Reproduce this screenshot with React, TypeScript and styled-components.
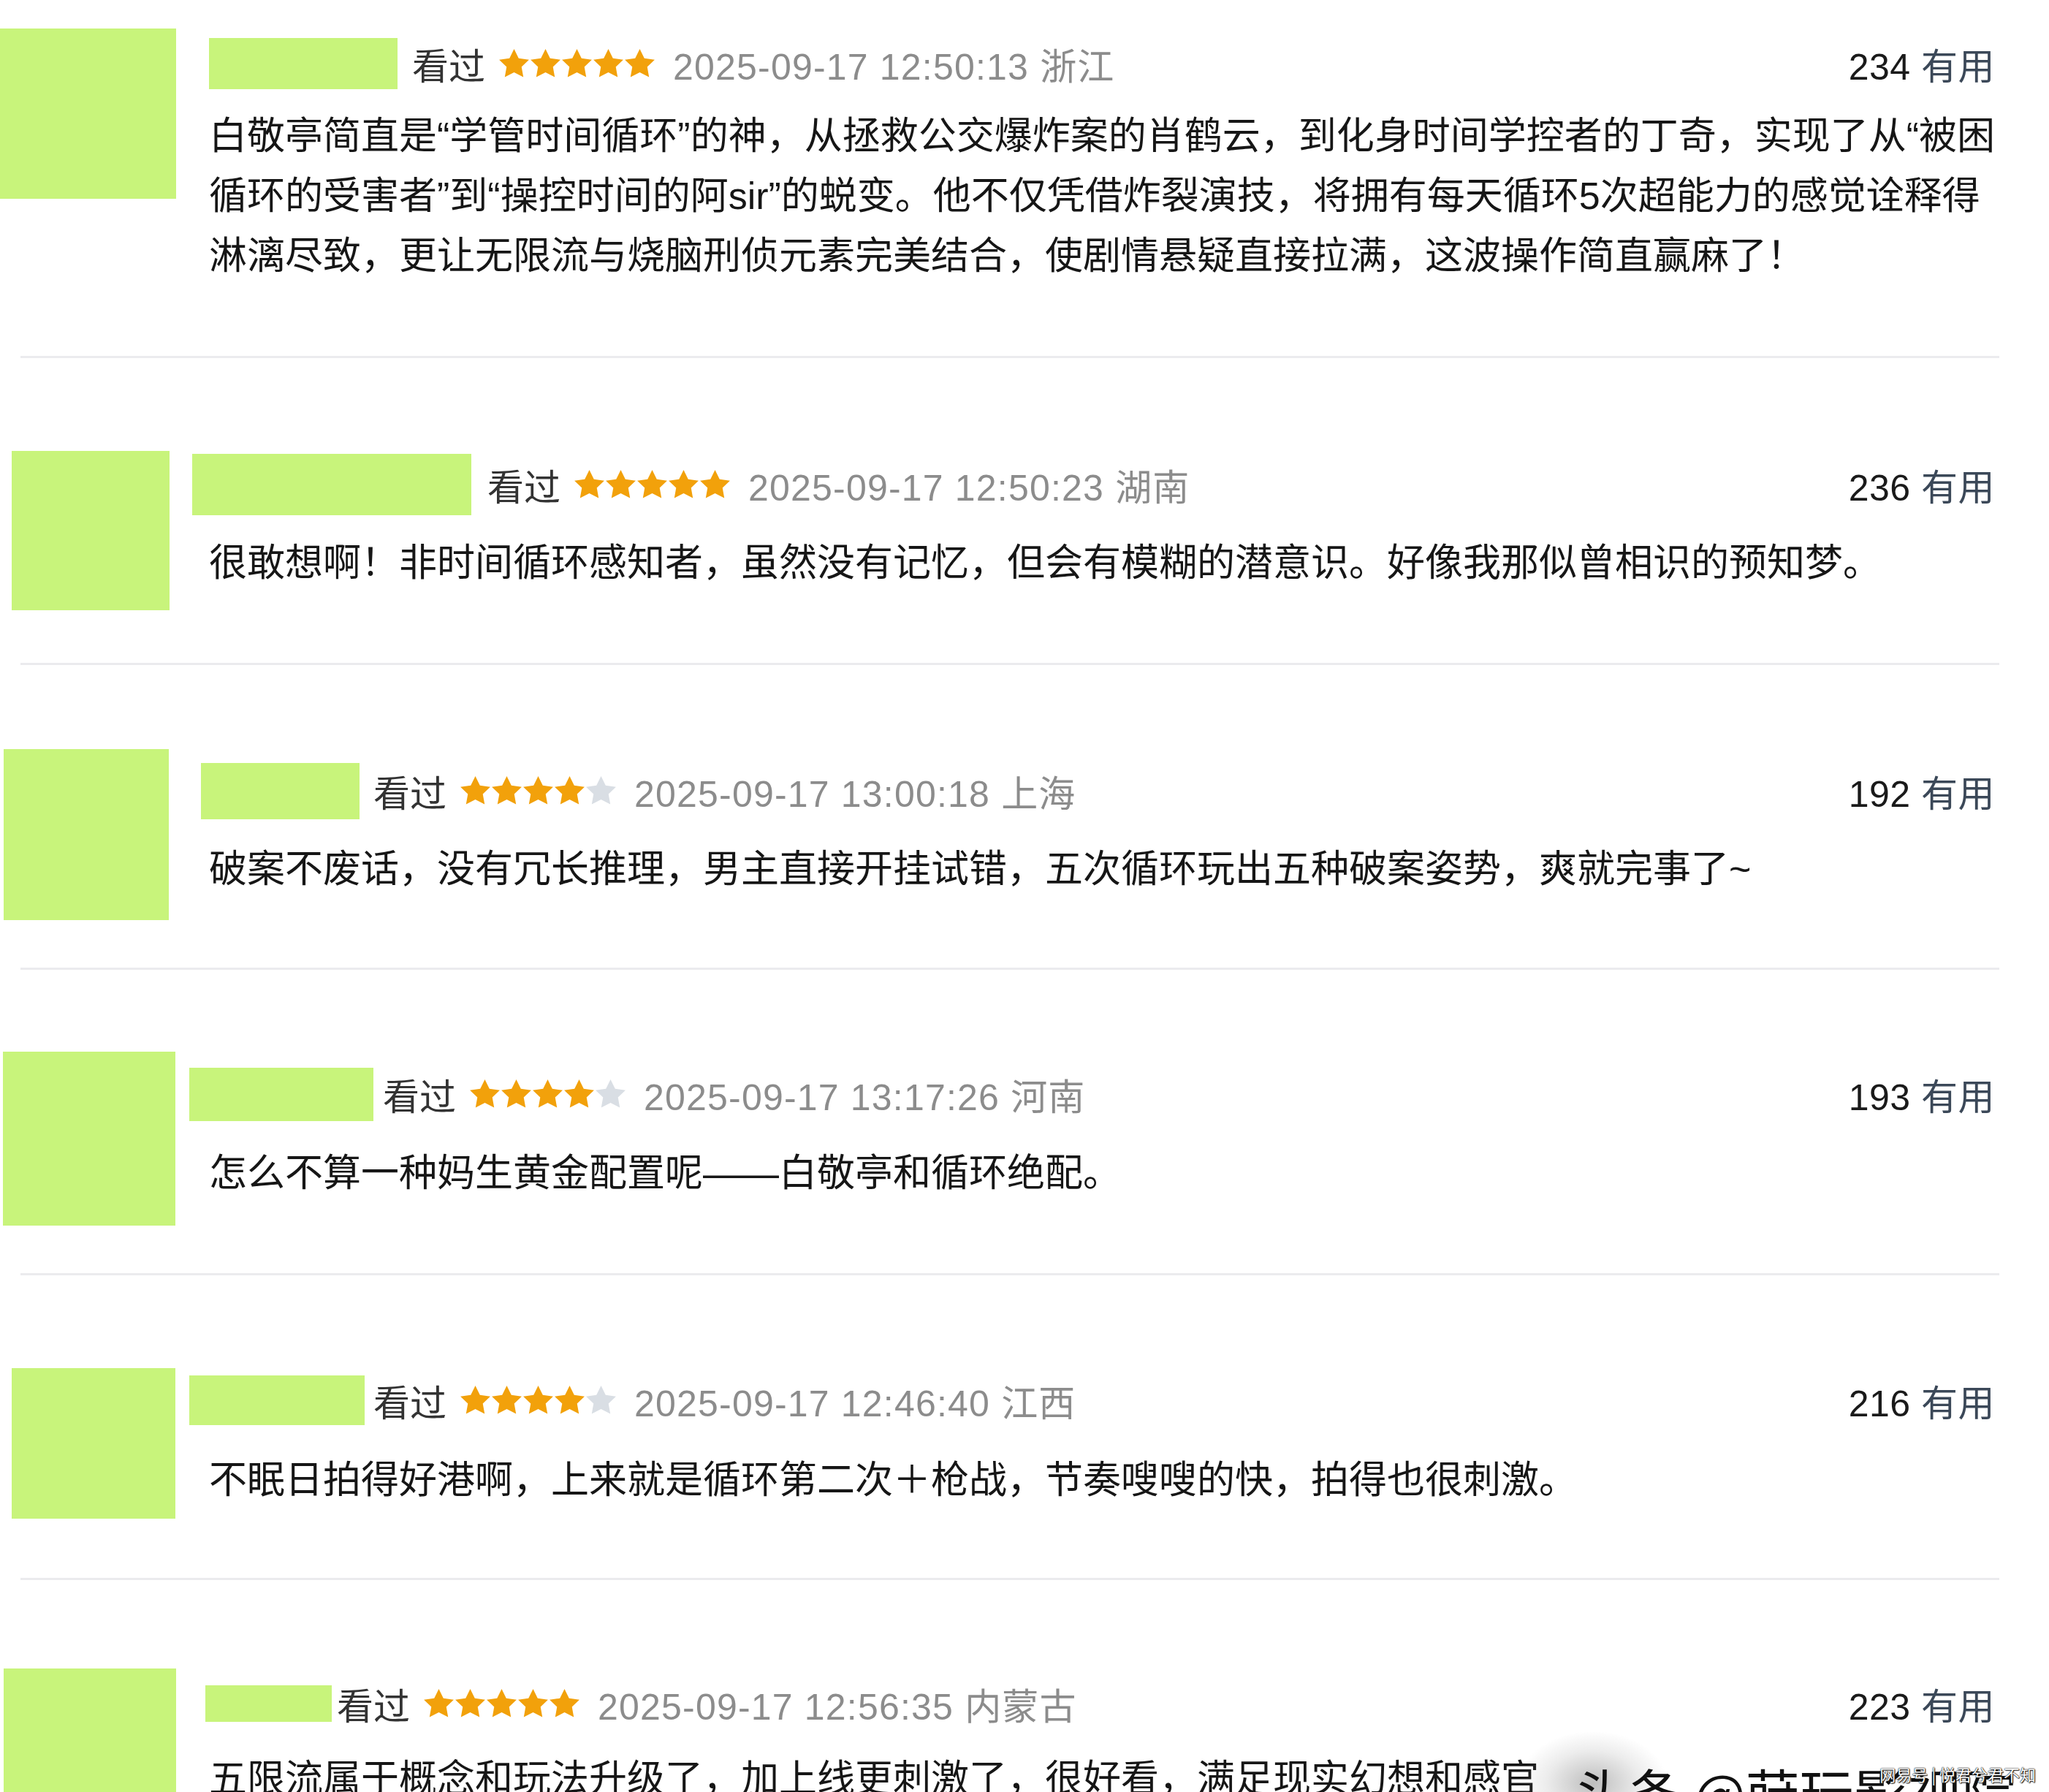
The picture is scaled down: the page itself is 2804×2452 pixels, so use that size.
import React from 'react';
import styled, { createGlobalStyle } from 'styled-components';

const GlobalStyle = createGlobalStyle`
    html, body {
        margin: 0;
        padding: 0;
        background: #ffffff;
    }
`;

const Page = styled.div`
    position: relative;
    width: 2804px;
    height: 2452px;
    overflow: hidden;
    background: #ffffff;
    font-family: "Liberation Sans", "Noto Sans CJK SC", sans-serif;
`;

const List = styled.div`
    display: flex;
    flex-direction: column;
`;

const Item = styled.div<{ $h?: number }>`
    display: grid;
    grid-template-columns: 286px 1fr;
    height: ${p => (p.$h ? `${p.$h}px` : 'auto')};
    padding-right: 74px;
`;

const Avatar = styled.div<{ $x: number; $y: number; $w: number; $h: number }>`
    margin-left: ${p => p.$x}px;
    margin-top: ${p => p.$y}px;
    width: ${p => p.$w}px;
    height: ${p => p.$h}px;
    background-color: #c8f47b;
`;

const Content = styled.div<{ $top: number }>`
    display: flex;
    flex-direction: column;
    padding-top: ${p => p.$top}px;
    min-width: 0;
`;

const MetaRow = styled.div`
    display: flex;
    align-items: center;
    height: 84px;
    font-size: 50px;
    white-space: nowrap;
`;

const NameBox = styled.div<{ $shift: number; $w: number; $h: number; $gap: number }>`
    margin-left: ${p => p.$shift}px;
    margin-right: ${p => p.$gap}px;
    width: ${p => p.$w}px;
    height: ${p => p.$h}px;
    flex-shrink: 0;
    background-color: #c8f47b;
`;

const Watched = styled.span`
    color: #333333;
    margin-right: 18px;
`;

const StarRow = styled.div`
    display: flex;
    margin-right: 24px;
`;

const DateText = styled.span`
    color: #8c8c8c;
    letter-spacing: 1.2px;
`;

const Useful = styled.span`
    margin-left: auto;
    color: #1a1a1a;
    letter-spacing: 0.5px;
`;

const UsefulLabel = styled.span`
    color: #3b4858;
`;

const Body = styled.div<{ $gap: number }>`
    margin-top: ${p => p.$gap}px;
    font-size: 52px;
    line-height: 82px;
    color: #161616;
`;

const Line = styled.div`
    white-space: nowrap;
`;

const Divider = styled.div`
    height: 3px;
    margin: 0 68px 0 28px;
    background-color: #ebebee;
`;

const Blur = styled.div`
    position: absolute;
    left: 2080px;
    top: 2370px;
    width: 200px;
    height: 140px;
    background: radial-gradient(ellipse at center, rgba(110, 110, 110, 0.45) 0%, rgba(160, 160, 160, 0.2) 45%, rgba(255, 255, 255, 0) 72%);
`;

const Watermark = styled.div`
    position: absolute;
    left: 2154px;
    top: 2414px;
    font-size: 74px;
    line-height: 1;
    color: #111111;
    font-family: "Noto Sans CJK SC", sans-serif;
    white-space: nowrap;
`;

const SmallMark = styled.div`
    position: absolute;
    right: 18px;
    top: 2416px;
    font-size: 22px;
    line-height: 1;
    color: #ffffff;
    font-family: "Noto Sans CJK SC", sans-serif;
    white-space: nowrap;
    text-shadow: 0 0 1px #000, 0 0 2px #000, 1px 1px 1px #333;
`;

const Star = ({ on }: { on: boolean }) => (
    <svg width="43" height="43" viewBox="0 0 24 24">
        <path
            d="M12 0.6l3.5 7.1 7.9 1.1-5.7 5.5 1.4 7.8L12 18.4l-7.1 3.7 1.4-7.8L0.6 8.8l7.9-1.1z"
            fill={on ? '#f2a10b' : '#d9dee4'}
        />
    </svg>
);

type Review = {
    h?: number;
    avatar: { x: number; y: number; w: number; h: number };
    top: number;
    name: { shift: number; w: number; h: number; gap: number };
    stars: number;
    date: string;
    useful: number;
    gap: number;
    lines: string[];
};

const reviews: Review[] = [
    {
        h: 487,
        avatar: { x: 0, y: 39, w: 241, h: 233 },
        top: 45,
        name: { shift: 0, w: 258, h: 70, gap: 20 },
        stars: 5,
        date: '2025-09-17 12:50:13 浙江',
        useful: 234,
        gap: 16,
        lines: [
            '白敬亭简直是“学管时间循环”的神，从拯救公交爆炸案的肖鹤云，到化身时间学控者的丁奇，实现了从“被困',
            '循环的受害者”到“操控时间的阿sir”的蜕变。他不仅凭借炸裂演技，将拥有每天循环5次超能力的感觉诠释得',
            '淋漓尽致，更让无限流与烧脑刑侦元素完美结合，使剧情悬疑直接拉满，这波操作简直赢麻了！',
        ],
    },
    {
        h: 417,
        avatar: { x: 16, y: 127, w: 216, h: 218 },
        top: 131,
        name: { shift: -23, w: 382, h: 84, gap: 22 },
        stars: 5,
        date: '2025-09-17 12:50:23 湖南',
        useful: 236,
        gap: 24,
        lines: ['很敢想啊！非时间循环感知者，虽然没有记忆，但会有模糊的潜意识。好像我那似曾相识的预知梦。'],
    },
    {
        h: 414,
        avatar: { x: 5, y: 115, w: 226, h: 234 },
        top: 130,
        name: { shift: -11, w: 217, h: 77, gap: 19 },
        stars: 4,
        date: '2025-09-17 13:00:18 上海',
        useful: 192,
        gap: 24,
        lines: ['破案不废话，没有冗长推理，男主直接开挂试错，五次循环玩出五种破案姿势，爽就完事了~'],
    },
    {
        h: 415,
        avatar: { x: 4, y: 112, w: 236, h: 238 },
        top: 128,
        name: { shift: -27, w: 252, h: 73, gap: 13 },
        stars: 4,
        date: '2025-09-17 13:17:26 河南',
        useful: 193,
        gap: 25,
        lines: ['怎么不算一种妈生黄金配置呢——白敬亭和循环绝配。'],
    },
    {
        h: 414,
        avatar: { x: 16, y: 127, w: 224, h: 206 },
        top: 129,
        name: { shift: -27, w: 240, h: 68, gap: 12 },
        stars: 4,
        date: '2025-09-17 12:46:40 江西',
        useful: 216,
        gap: 26,
        lines: ['不眠日拍得好港啊，上来就是循环第二次＋枪战，节奏嗖嗖的快，拍得也很刺激。'],
    },
    {
        avatar: { x: 5, y: 121, w: 236, h: 240 },
        top: 127,
        name: { shift: -5, w: 173, h: 50, gap: 7 },
        stars: 5,
        date: '2025-09-17 12:56:35 内蒙古',
        useful: 223,
        gap: 20,
        lines: ['五限流属于概念和玩法升级了，加上线更刺激了，很好看，满足现实幻想和感官'],
    },
];

const ReviewItem = ({ r }: { r: Review }) => (
    <Item $h={r.h}>
        <Avatar $x={r.avatar.x} $y={r.avatar.y} $w={r.avatar.w} $h={r.avatar.h} />
        <Content $top={r.top}>
            <MetaRow>
                <NameBox $shift={r.name.shift} $w={r.name.w} $h={r.name.h} $gap={r.name.gap} />
                <Watched>看过</Watched>
                <StarRow>
                    {[0, 1, 2, 3, 4].map(i => (
                        <Star key={i} on={i < r.stars} />
                    ))}
                </StarRow>
                <DateText>{r.date}</DateText>
                <Useful>
                    {r.useful} <UsefulLabel>有用</UsefulLabel>
                </Useful>
            </MetaRow>
            <Body $gap={r.gap}>
                {r.lines.map((l, i) => (
                    <Line key={i}>{l}</Line>
                ))}
            </Body>
        </Content>
    </Item>
);

const App = () => {
    return (
        <Page>
            <GlobalStyle />
            <List>
                {reviews.map((r, i) => (
                    <React.Fragment key={i}>
                        <ReviewItem r={r} />
                        {i < reviews.length - 1 && <Divider />}
                    </React.Fragment>
                ))}
            </List>
            <Blur />
            <Watermark>头条 @莳玩影视院</Watermark>
            <SmallMark>网易号 | 悦君兮君不知</SmallMark>
        </Page>
    );
};

export default App;
